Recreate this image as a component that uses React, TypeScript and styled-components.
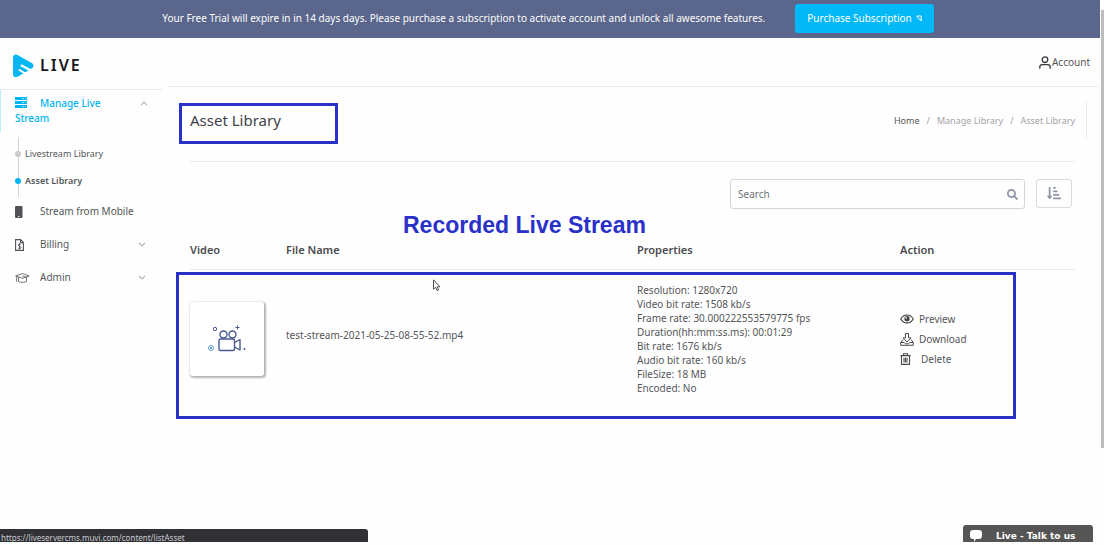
import React from 'react';
import styled, { createGlobalStyle } from 'styled-components';
import { FaSearch, FaSortAmountDownAlt } from 'react-icons/fa';

const ink = '#555659';
const accent = '#03b4f2';
const marker = '#2a31c9';
const rule = '#e9e9eb';

const GlobalStyle = createGlobalStyle`
  *, *::before, *::after { box-sizing: border-box; }
  body {
    margin: 0;
    background: #fefefe;
    color: ${ink};
    font-family: "Noto Sans", "Open Sans", sans-serif;
    font-size: 10px;
    line-height: 15px;
  }
  a { color: inherit; text-decoration: none; }
  button, input { font: inherit; }
  svg { display: block; flex: none; }
`;

const Screen = styled.div`
  display: flex;
  min-height: 100vh;
`;

const Page = styled.div`
  flex: 1;
  min-width: 0;
`;

const ScrollTrack = styled.div`
  width: 4px;
  padding: 10px 0 0 1px;
`;

const ScrollThumb = styled.div`
  height: 438px;
  background: #bdbdbd;
`;

const Banner = styled.div`
  display: flex;
  align-items: center;
  justify-content: center;
  gap: 30px;
  height: 38px;
  padding: 0 4px 2px 0;
  background: #5a668b;
  color: #fff;
`;

const PurchaseButton = styled.button`
  display: flex;
  align-items: center;
  gap: 4px;
  height: 29px;
  padding: 0 12px;
  border: 0;
  border-radius: 3px;
  background: #03b8f6;
  color: #fff;
`;

const Columns = styled.div`
  display: flex;
`;

const Sidebar = styled.aside`
  width: 162px;
  flex: none;
`;

const Brand = styled.a`
  display: flex;
  align-items: center;
  gap: 6px;
  height: 52px;
  padding: 4px 0 0 13px;
  border-bottom: 1px solid ${rule};
`;

const BrandName = styled.span`
  color: #17171a;
  font-size: 16px;
  font-weight: 600;
  letter-spacing: 2px;
`;

const NavGroup = styled.a`
  display: flex;
  justify-content: space-between;
  padding: 6px 14px 6px 14px;
  border-left: 1px solid #bfeefc;
  color: ${accent};
  font-weight: 500;
`;

const GroupLabel = styled.span`
  width: 92px;
  svg {
    display: inline-block;
    margin-right: 13px;
    vertical-align: -1px;
  }
`;

const SubList = styled.ul`
  position: relative;
  margin: 8px 0 1px;
  padding: 0;
  list-style: none;
  &::before {
    content: '';
    position: absolute;
    top: -3px;
    bottom: -3px;
    left: 18px;
    width: 1px;
    background: #d4d4d6;
  }
`;

const SubItem = styled.li<{ $active?: boolean }>`
  display: flex;
  align-items: center;
  gap: 4px;
  height: 27px;
  padding-left: 15px;
  font-size: 9px;
  font-weight: ${(p) => (p.$active ? 600 : 400)};
  &::before {
    content: '';
    position: relative;
    width: 6px;
    height: 6px;
    border-radius: 50%;
    background: ${(p) => (p.$active ? accent : '#cccccf')};
  }
`;

const NavLink = styled.a`
  display: flex;
  align-items: center;
  height: 33px;
  padding: 0 16px 0 15px;
`;

const NavIcon = styled.span`
  width: 25px;
`;

const NavText = styled.span`
  flex: 1;
`;

const Main = styled.main`
  flex: 1;
  min-width: 0;
  padding-left: 6px;
`;

const TopBar = styled.header`
  display: flex;
  align-items: center;
  justify-content: flex-end;
  height: 49px;
  margin-right: 2px;
  padding-right: 8px;
  border-bottom: 1px solid ${rule};
`;

const Account = styled.a`
  display: flex;
  align-items: center;
  gap: 1px;
`;

const Content = styled.div`
  position: relative;
  padding: 15px 25px 0 22px;
`;

const TitleRow = styled.div`
  display: flex;
  align-items: center;
  justify-content: space-between;
  height: 36px;
  margin-right: -12px;
  padding-right: 11px;
  border-right: 1px solid ${rule};
`;

const Title = styled.h1`
  position: relative;
  margin: 0;
  color: #414245;
  font-size: 15px;
  font-weight: 400;
  line-height: 20px;
`;

const Crumbs = styled.nav`
  display: flex;
  gap: 7px;
  color: #a3a3a6;
  font-size: 9px;
`;

const CrumbHome = styled.a`
  color: ${ink};
`;

const Divider = styled.hr`
  margin: 23px 0 17px;
  border: 0;
  border-top: 1px solid ${rule};
`;

const Tools = styled.div`
  display: flex;
  justify-content: flex-end;
  gap: 11px;
  padding-right: 3px;
`;

const SearchBox = styled.label`
  display: flex;
  align-items: center;
  width: 295px;
  height: 30px;
  padding: 0 6px 0 7px;
  border: 1px solid #d3d5d8;
  border-radius: 3px;
  color: #8e92a5;
`;

const SearchInput = styled.input`
  flex: 1;
  min-width: 0;
  padding: 0;
  border: 0;
  outline: 0;
  background: transparent;
  &::placeholder { color: #6d727a; opacity: 1; }
`;

const SortButton = styled.button`
  display: flex;
  align-items: center;
  justify-content: center;
  width: 36px;
  height: 29px;
  padding: 0 0 2px;
  border: 1px solid #d9dbde;
  border-radius: 3px;
  background: transparent;
  color: #8e92a5;
`;

const TableArea = styled.div`
  position: relative;
  margin-top: 22px;
`;

const Table = styled.table`
  width: 100%;
  border-collapse: collapse;
  table-layout: fixed;
`;

const Head = styled.th<{ $width?: number }>`
  width: ${(p) => (p.$width ? `${p.$width}px` : 'auto')};
  height: 38px;
  padding: 0;
  border-bottom: 1px solid ${rule};
  color: #4a4b4e;
  font-size: 11px;
  font-weight: 600;
  text-align: left;
`;

const Cell = styled.td`
  height: 140px;
  padding: 0;
  vertical-align: middle;
`;

const Thumbnail = styled.div`
  display: flex;
  align-items: center;
  justify-content: center;
  width: 74px;
  height: 74px;
  border-radius: 3px;
  background: #fff;
  box-shadow: 1px 1px 2px 1px #b4b4b6;
`;

const FileName = styled.div`
  padding-bottom: 7px;
`;

const Properties = styled.ul`
  margin: 0;
  padding: 0;
  list-style: none;
  line-height: 14px;
`;

const Action = styled.button<{ $gap?: number }>`
  display: flex;
  align-items: center;
  gap: ${(p) => p.$gap ?? 5}px;
  height: 20px;
  padding: 0;
  border: 0;
  background: transparent;
  color: ${ink};
`;

const Highlight = styled.div<{ $inset: string }>`
  position: absolute;
  inset: ${(p) => p.$inset};
  border: 3px solid ${marker};
  pointer-events: none;
`;

const Note = styled.div`
  position: absolute;
  top: 124px;
  left: 235px;
  color: ${marker};
  font: bold 23px/28px "Liberation Sans", Arial, sans-serif;
  white-space: nowrap;
`;

const Pointer = styled.svg`
  position: absolute;
  top: 192px;
  left: 264px;
`;

const StatusBar = styled.div`
  position: fixed;
  bottom: 3px;
  left: 0;
  width: 368px;
  height: 13px;
  padding: 1px;
  overflow: hidden;
  border-top-right-radius: 3px;
  background: #303135;
  color: #c9cbd0;
  font-size: 8px;
  line-height: 15px;
`;

const ChatTab = styled.button`
  position: fixed;
  right: 11px;
  bottom: 3px;
  display: flex;
  align-items: flex-start;
  gap: 14px;
  width: 130px;
  height: 17px;
  padding: 5px 7px 0;
  overflow: hidden;
  border: 0;
  border-radius: 3px 3px 0 0;
  background: #555;
  color: #fff;
  font: bold 9px/12px "DejaVu Sans", Verdana, sans-serif;
  white-space: nowrap;
`;

const Chevron = ({ up }: { up?: boolean }) => (
  <svg width="8" height="15" viewBox="0 0 8 15" fill="none" stroke="#a9b1bd" strokeWidth="1.1">
    <path d={up ? 'M1 9.2 4 6l3 3.2' : 'M1 5.8 4 9l3-3.2'} />
  </svg>
);

const properties = [
  'Resolution: 1280x720',
  'Video bit rate: 1508 kb/s',
  'Frame rate: 30.000222553579775 fps',
  'Duration(hh:mm:ss.ms): 00:01:29',
  'Bit rate: 1676 kb/s',
  'Audio bit rate: 160 kb/s',
  'FileSize: 18 MB',
  'Encoded: No',
];

export default function App() {
  return (
    <Screen>
      <GlobalStyle />
      <Page>
        <Banner>
          <span>
            Your Free Trial will expire in in 14 days days. Please purchase a subscription to activate
            account and unlock all awesome features.
          </span>
          <PurchaseButton>
            Purchase Subscription
            <svg width="6" height="7" viewBox="0 0 6 7" fill="none" stroke="#fff" strokeWidth="1">
              <path d="M.7 1h4.500v5L4 4.500 2.500 3.500z" />
            </svg>
          </PurchaseButton>
        </Banner>
        <Columns>
          <Sidebar>
            <Brand href="#">
              <svg width="21" height="24" viewBox="0 0 21 24">
                <path
                  fill="#08b7f1"
                  d="M0 4C0 .8 2.4-.2 5 1.2L18.7 9c2.4 1.5 2.3 4-.1 5.400L5.200 22.600C2.500 24 0 23.200 0 20z"
                />
                <path
                  fill="none"
                  stroke="#fefefe"
                  strokeWidth="2"
                  strokeLinecap="round"
                  d="M8.500 11.500 18 16.500M6.500 16l8 5"
                />
              </svg>
              <BrandName>LIVE</BrandName>
            </Brand>
            <NavGroup href="#">
              <GroupLabel>
                <svg width="12" height="11" viewBox="0 0 12 11" fill={accent}>
                  <path d="M0 0h12v3H0zM0 4h12v3H0zM0 8h12v3H0z" />
                  <path fill="#fefefe" fillOpacity=".6" d="M7 1h2v1H7zM10 1h1v1h-1zM7 5h2v1H7zM10 5h1v1h-1zM7 9h2v1H7zM10 9h1v1h-1z" />
                </svg>
                Manage Live Stream
              </GroupLabel>
              <Chevron up />
            </NavGroup>
            <SubList>
              <SubItem>
                <a href="#">Livestream Library</a>
              </SubItem>
              <SubItem $active>
                <a href="#">Asset Library</a>
              </SubItem>
            </SubList>
            <NavLink href="#">
              <NavIcon>
                <svg width="8" height="12" viewBox="0 0 8 12">
                  <rect width="7.500" height="12" rx="1" fill="#515258" />
                  <circle cx="3.750" cy="10.500" r=".7" fill="#fff" />
                </svg>
              </NavIcon>
              <NavText>Stream from Mobile</NavText>
            </NavLink>
            <NavLink href="#">
              <NavIcon>
                <svg width="9" height="12" viewBox="0 0 9 12" fill="none" stroke="#515258" strokeWidth="1.100">
                  <path d="M.6.6h5l2.800 2.800v8H.6zM5.500.6v3h2.900" />
                  <path strokeWidth=".9" d="M5.800 5.400c-.5-.4-2.500-.6-2.500.6S5.900 7.200 5.900 8.500s-2.200 1.100-2.800.6M4.500 4.500v6" />
                </svg>
              </NavIcon>
              <NavText>Billing</NavText>
              <Chevron />
            </NavLink>
            <NavLink href="#">
              <NavIcon>
                <svg width="15" height="10" viewBox="0 0 15 10" fill="none" stroke="#626369" strokeWidth=".9" strokeLinejoin="round">
                  <path d="M.6 3 7.500.6 14.300 3 7.500 5.300zM3.500 4.200v4.200c1.900 1.300 6.200 1.300 8 0V4.200M1.700 3.600v5.200M7.500 3l4 1.300" />
                </svg>
              </NavIcon>
              <NavText>Admin</NavText>
              <Chevron />
            </NavLink>
          </Sidebar>
          <Main>
            <TopBar>
              <Account href="#">
                <svg width="12" height="13" viewBox="0 0 12 13" fill="none" stroke="#37383b" strokeWidth="1.300">
                  <circle cx="6" cy="3.700" r="2.800" />
                  <path d="M.8 12.700V11c0-1.500 1-2.400 2.400-2.400h5.600c1.400 0 2.400.9 2.400 2.400v1.700" />
                </svg>
                Account
              </Account>
            </TopBar>
            <Content>
              <TitleRow>
                <Title>
                  Asset Library
                  <Highlight $inset="-7px -57px -14px -11px" />
                </Title>
                <Crumbs aria-label="Breadcrumb">
                  <CrumbHome href="#">Home</CrumbHome>
                  <span>/</span>
                  <a href="#">Manage Library</a>
                  <span>/</span>
                  <span>Asset Library</span>
                </Crumbs>
              </TitleRow>
              <Divider />
              <Tools>
                <SearchBox>
                  <SearchInput type="text" placeholder="Search" aria-label="Search" />
                  <FaSearch size={11} />
                </SearchBox>
                <SortButton aria-label="Sort">
                  <FaSortAmountDownAlt size={14} />
                </SortButton>
              </Tools>
              <TableArea>
                <Table>
                  <thead>
                    <tr>
                      <Head $width={96}>Video</Head>
                      <Head>File Name</Head>
                      <Head $width={263}>Properties</Head>
                      <Head $width={175}>Action</Head>
                    </tr>
                  </thead>
                  <tbody>
                    <tr>
                      <Cell>
                        <Thumbnail>
                          <svg width="40" height="30" viewBox="0 0 40 30" fill="none" stroke="#4a5a92" strokeWidth="1.400">
                            <rect x="12" y="15" width="15.500" height="11.500" rx="1.500" />
                            <circle cx="16.500" cy="10.500" r="3.500" />
                            <circle cx="25.500" cy="10.500" r="3.500" />
                            <path strokeLinejoin="round" d="M27.500 18.500l5.500-3v10.500l-5.500-3" />
                            <path strokeWidth="1" d="M30.500 1.500v4M28.500 3.500h4" />
                            <circle cx="8" cy="5" r="1.700" strokeWidth="1" />
                            <circle cx="4" cy="24" r="2.500" stroke="#5b9fd0" strokeWidth="1" />
                            <circle cx="4" cy="24" r=".6" stroke="#3e6fac" strokeWidth="1" />
                            <path strokeWidth="1" d="M36.500 25h2M37.500 24v2" />
                          </svg>
                        </Thumbnail>
                      </Cell>
                      <Cell>
                        <FileName>test-stream-2021-05-25-08-55-52.mp4</FileName>
                      </Cell>
                      <Cell>
                        <Properties>
                          {properties.map((line) => (
                            <li key={line}>{line}</li>
                          ))}
                        </Properties>
                      </Cell>
                      <Cell>
                        <Action>
                          <svg width="14" height="10" viewBox="0 0 14 10" fill="none" stroke="#3f4043" strokeWidth="1.100">
                            <path d="M.7 5C3.800-.4 10.200-.4 13.300 5 10.200 10.200 3.800 10.200.7 5z" />
                            <circle cx="7" cy="4.700" r="2.600" fill="#3f4043" stroke="none" />
                            <circle cx="6.200" cy="3.900" r=".8" fill="#fff" stroke="none" />
                          </svg>
                          Preview
                        </Action>
                        <Action>
                          <svg width="14" height="13" viewBox="0 0 14 13" fill="none" stroke="#4a4b4e" strokeLinejoin="round">
                            <path d="M5.500.6h3v4.200h2.400L7 9 3.100 4.800h2.400z" />
                            <path d="M3 6.500.7 9.500v2.800h12.600V9.500L11 6.500M.7 9.500h3.600l1.200 1.300h3l1.200-1.300h3.600" />
                          </svg>
                          Download
                        </Action>
                        <Action $gap={10}>
                          <svg width="11" height="12" viewBox="0 0 11 12" fill="none" stroke="#4a4b4e" strokeWidth="1.100">
                            <path d="M.3 2.600h10.400M3.500 2.600V.7h4v1.900M1.500 2.600v8.800h8V2.600M4 4.800v4.600M5.500 4.800v4.600M7 4.800v4.600" />
                          </svg>
                          Delete
                        </Action>
                      </Cell>
                    </tr>
                  </tbody>
                </Table>
                <Highlight $inset="41px 59px -10px -14px" />
              </TableArea>
              <Note>Recorded Live Stream</Note>
              <Pointer width="9" height="13" viewBox="0 0 9 13" fill="#fff" stroke="#3a3a3e" strokeWidth=".9" aria-hidden="true">
                <path d="M1.500.9v9.300l2.100-1.900 1.500 3.300 1.500-.7-1.400-3.100h2.700z" />
              </Pointer>
            </Content>
          </Main>
        </Columns>
      </Page>
      <ScrollTrack>
        <ScrollThumb />
      </ScrollTrack>
      <StatusBar>https://liveservercms.muvi.com/content/listAsset</StatusBar>
      <ChatTab>
        <svg width="12" height="12" viewBox="0 0 12 12" fill="#fff">
          <path d="M3 0h6a3 3 0 0 1 3 3v3a3 3 0 0 1-3 3H6l-2 3V9H3a3 3 0 0 1-3-3V3a3 3 0 0 1 3-3z" />
        </svg>
        Live - Talk to us
      </ChatTab>
    </Screen>
  );
}
